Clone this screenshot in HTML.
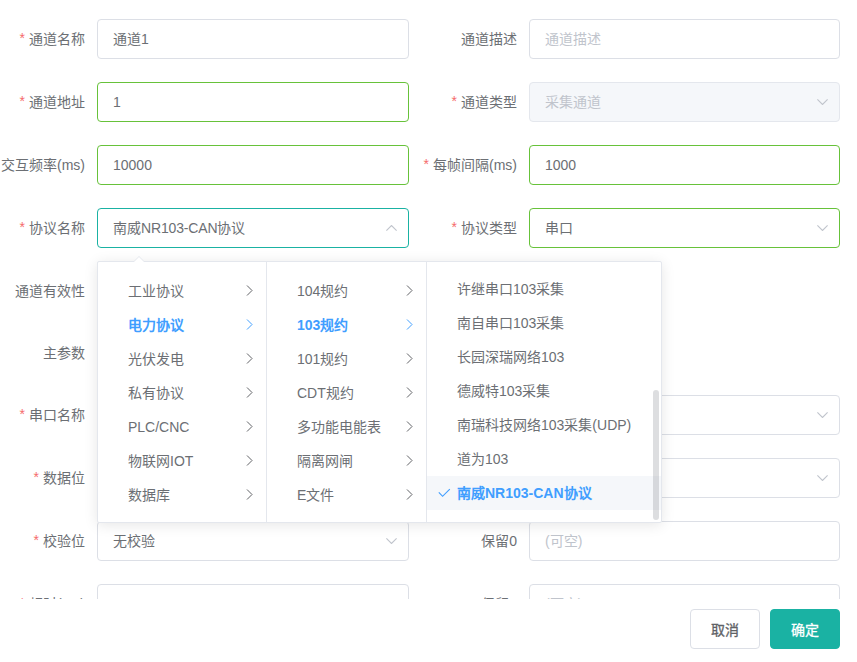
<!DOCTYPE html>
<html lang="zh-CN">
<head>
<meta charset="utf-8">
<style>
*{box-sizing:border-box;margin:0;padding:0}
html,body{width:857px;height:662px;overflow:hidden;background:#fff;font-family:"Liberation Sans",sans-serif;font-size:14px;color:#606266}
#body{position:absolute;left:0;top:0;width:857px;height:599px;overflow:hidden}
.l{position:absolute;width:300px;height:40px;line-height:41px;text-align:right;white-space:nowrap;color:#6c6f74}
.l.a{left:-215px}
.l.b{left:217px}
.s{color:#F56C6C;margin-right:4px;position:relative;top:-1px}
.i{position:absolute;height:40px;border:1px solid #DCDFE6;border-radius:4px;padding:0 15px;line-height:39px;white-space:nowrap;color:#6c6f74;background:#fff}
.i.a{left:97px;width:312px}
.i.b{left:529px;width:311px}
.i.ok{border-color:#67C23A}
.i.fo{border-color:#1AB2A3}
.i.dis{background:#F5F7FA;border-color:#E4E7ED;color:#C0C4CC}
.ph{color:#C0C4CC}
.chev{position:absolute;right:11px;top:16px;width:11px;height:6px}
#panel{position:absolute;left:97px;top:261px;width:565px;height:262px;border:1px solid #E4E7ED;border-radius:2px;background:#fff;box-shadow:0 2px 14px 0 rgba(0,0,0,.1);overflow:hidden}
.m{position:absolute;top:0;height:260px;overflow:hidden}
.m1{left:0;width:169px;border-right:1px solid #E4E7ED}
.m2{left:169px;width:160px;border-right:1px solid #E4E7ED}
.m3{left:329px;width:234px}
.n{position:absolute;left:0;right:0;height:34px;line-height:34px;padding-left:30px;white-space:nowrap;color:#6c6f74}
.n.act{color:#409EFF;font-weight:bold}
.cb{}
.n.sel{background:#F5F7FA}
.arr{position:absolute;right:13px;top:11px;width:7px;height:11px}
#arrow{position:absolute;z-index:5;left:134px;top:256px;width:0;height:0;border-left:5px solid transparent;border-right:5px solid transparent;border-bottom:5px solid #E4E7ED}
#arrow2{position:absolute;z-index:6;left:134px;top:257px;width:0;height:0;border-left:5px solid transparent;border-right:5px solid transparent;border-bottom:5px solid #fff}
.btn{position:absolute;top:609px;width:70px;height:40px;border-radius:4px;font-size:14px;line-height:38px;text-align:center;font-weight:500;line-height:40px}
#cancel{left:690px;border:1px solid #DCDFE6;color:#606266;background:#fff;-webkit-text-stroke:0.3px #606266}
#ok{left:770px;border:1px solid #1AB2A3;background:#1AB2A3;color:#fff;-webkit-text-stroke:0.3px #fff}
</style>
</head>
<body>
<div id="body">
  <!-- row 1 -->
  <div class="l a" style="top:19px"><span class="s">*</span>通道名称</div>
  <div class="i a" style="top:19px">通道1</div>
  <div class="l b" style="top:19px">通道描述</div>
  <div class="i b" style="top:19px"><span class="ph">通道描述</span></div>
  <!-- row 2 -->
  <div class="l a" style="top:82px"><span class="s">*</span>通道地址</div>
  <div class="i a ok" style="top:82px">1</div>
  <div class="l b" style="top:82px"><span class="s">*</span>通道类型</div>
  <div class="i b dis" style="top:82px">采集通道<svg class="chev" viewBox="0 0 11 6"><polyline points="0.4,0.4 5.5,5.5 10.6,0.4" fill="none" stroke="#C0C4CC" stroke-width="1.1"/></svg></div>
  <!-- row 3 -->
  <div class="l a" style="top:145px"><span class="s">*</span>交互频率(ms)</div>
  <div class="i a ok" style="top:145px">10000</div>
  <div class="l b" style="top:145px"><span class="s">*</span>每帧间隔(ms)</div>
  <div class="i b ok" style="top:145px">1000</div>
  <!-- row 4 -->
  <div class="l a" style="top:208px"><span class="s">*</span>协议名称</div>
  <div class="i a fo" style="top:208px">南威<span style="letter-spacing:-0.15px">NR103-CAN</span>协议<svg class="chev" style="top:16px" viewBox="0 0 11 6"><polyline points="0.4,5.6 5.5,0.5 10.6,5.6" fill="none" stroke="#C0C4CC" stroke-width="1.1"/></svg></div>
  <div class="l b" style="top:208px"><span class="s">*</span>协议类型</div>
  <div class="i b ok" style="top:208px">串口<svg class="chev" viewBox="0 0 11 6"><polyline points="0.4,0.4 5.5,5.5 10.6,0.4" fill="none" stroke="#C0C4CC" stroke-width="1.1"/></svg></div>
  <!-- row 5 -->
  <div class="l a" style="top:271px">通道有效性</div>
  <!-- row 6 -->
  <div class="l a" style="top:333px">主参数</div>
  <!-- row 7 -->
  <div class="l a" style="top:395px"><span class="s">*</span>串口名称</div>
  <div class="i a" style="top:395px"></div>
  <div class="i b" style="top:395px"><svg class="chev" viewBox="0 0 11 6"><polyline points="0.4,0.4 5.5,5.5 10.6,0.4" fill="none" stroke="#C0C4CC" stroke-width="1.1"/></svg></div>
  <!-- row 8 -->
  <div class="l a" style="top:458px"><span class="s">*</span>数据位</div>
  <div class="i a" style="top:458px"></div>
  <div class="i b" style="top:458px"><svg class="chev" viewBox="0 0 11 6"><polyline points="0.4,0.4 5.5,5.5 10.6,0.4" fill="none" stroke="#C0C4CC" stroke-width="1.1"/></svg></div>
  <!-- row 9 -->
  <div class="l a" style="top:521px"><span class="s">*</span>校验位</div>
  <div class="i a" style="top:521px">无校验<svg class="chev" viewBox="0 0 11 6"><polyline points="0.4,0.4 5.5,5.5 10.6,0.4" fill="none" stroke="#C0C4CC" stroke-width="1.1"/></svg></div>
  <div class="l b" style="top:521px">保留0</div>
  <div class="i b" style="top:521px"><span class="ph">(可空)</span></div>
  <!-- row 10 -->
  <div class="l a" style="top:584px"><span class="s">*</span>超时(ms)</div>
  <div class="i a" style="top:584px"></div>
  <div class="l b" style="top:584px">保留1</div>
  <div class="i b" style="top:584px"><span class="ph">(可空)</span></div>
</div>

<div id="panel">
  <div class="m m1">
    <div class="n" style="top:12px">工业协议<svg class="arr" viewBox="0 0 7 11"><polyline points="1,0.5 6,5.5 1,10.5" fill="none" stroke="#606266" stroke-width="1"/></svg></div>
    <div class="n act" style="top:46px"><span class="cb">电力协议</span><svg class="arr" viewBox="0 0 7 11"><polyline points="1,0.5 6,5.5 1,10.5" fill="none" stroke="#409EFF" stroke-width="1"/></svg></div>
    <div class="n" style="top:80px">光伏发电<svg class="arr" viewBox="0 0 7 11"><polyline points="1,0.5 6,5.5 1,10.5" fill="none" stroke="#606266" stroke-width="1"/></svg></div>
    <div class="n" style="top:114px">私有协议<svg class="arr" viewBox="0 0 7 11"><polyline points="1,0.5 6,5.5 1,10.5" fill="none" stroke="#606266" stroke-width="1"/></svg></div>
    <div class="n" style="top:148px">PLC/CNC<svg class="arr" viewBox="0 0 7 11"><polyline points="1,0.5 6,5.5 1,10.5" fill="none" stroke="#606266" stroke-width="1"/></svg></div>
    <div class="n" style="top:182px">物联网IOT<svg class="arr" viewBox="0 0 7 11"><polyline points="1,0.5 6,5.5 1,10.5" fill="none" stroke="#606266" stroke-width="1"/></svg></div>
    <div class="n" style="top:216px">数据库<svg class="arr" viewBox="0 0 7 11"><polyline points="1,0.5 6,5.5 1,10.5" fill="none" stroke="#606266" stroke-width="1"/></svg></div>
  </div>
  <div class="m m2">
    <div class="n" style="top:12px">104规约<svg class="arr" viewBox="0 0 7 11"><polyline points="1,0.5 6,5.5 1,10.5" fill="none" stroke="#606266" stroke-width="1"/></svg></div>
    <div class="n act" style="top:46px">103<span class="cb">规约</span><svg class="arr" viewBox="0 0 7 11"><polyline points="1,0.5 6,5.5 1,10.5" fill="none" stroke="#409EFF" stroke-width="1"/></svg></div>
    <div class="n" style="top:80px">101规约<svg class="arr" viewBox="0 0 7 11"><polyline points="1,0.5 6,5.5 1,10.5" fill="none" stroke="#606266" stroke-width="1"/></svg></div>
    <div class="n" style="top:114px">CDT规约<svg class="arr" viewBox="0 0 7 11"><polyline points="1,0.5 6,5.5 1,10.5" fill="none" stroke="#606266" stroke-width="1"/></svg></div>
    <div class="n" style="top:148px">多功能电能表<svg class="arr" viewBox="0 0 7 11"><polyline points="1,0.5 6,5.5 1,10.5" fill="none" stroke="#606266" stroke-width="1"/></svg></div>
    <div class="n" style="top:182px">隔离网闸<svg class="arr" viewBox="0 0 7 11"><polyline points="1,0.5 6,5.5 1,10.5" fill="none" stroke="#606266" stroke-width="1"/></svg></div>
    <div class="n" style="top:216px">E文件<svg class="arr" viewBox="0 0 7 11"><polyline points="1,0.5 6,5.5 1,10.5" fill="none" stroke="#606266" stroke-width="1"/></svg></div>
  </div>
  <div class="m m3">
    <div class="n" style="top:10px">许继串口103采集</div>
    <div class="n" style="top:44px">南自串口103采集</div>
    <div class="n" style="top:78px">长园深瑞网络103</div>
    <div class="n" style="top:112px">德威特103采集</div>
    <div class="n" style="top:146px">南瑞科技网络103采集(UDP)</div>
    <div class="n" style="top:180px">道为103</div>
    <div class="n act sel" style="top:214px"><svg style="position:absolute;left:11px;top:12px" width="13" height="10" viewBox="0 0 13 10"><polyline points="0.8,4.4 4.6,8.3 11.8,1.1" fill="none" stroke="#409EFF" stroke-width="1.15"/></svg><span class="cb">南威</span>NR103-CAN<span class="cb">协议</span></div>
    <div style="position:absolute;left:226px;top:128px;width:6px;height:130px;border-radius:3px;background:rgba(144,147,153,.3)"></div>
  </div>
</div>

<div id="arrow"></div><div id="arrow2"></div>
<div class="btn" id="cancel">取消</div>
<div class="btn" id="ok">确定</div>
</body>
</html>
